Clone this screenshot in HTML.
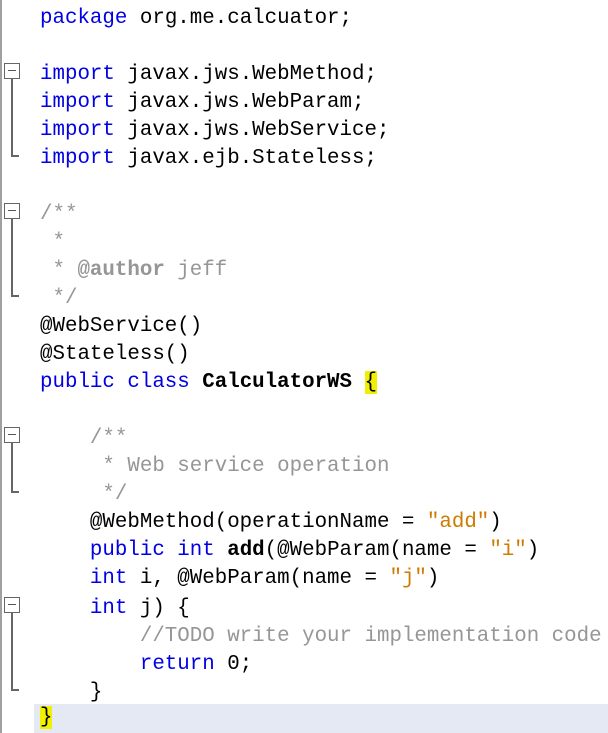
<!DOCTYPE html>
<html><head><meta charset="utf-8"><style>
body{margin:0;width:608px;height:733px;background:#fff;position:relative;overflow:hidden;font-family:"Liberation Mono",monospace;font-size:20.8px;}
.gut{position:absolute;left:0;top:0;width:2px;height:733px;background:#a0a0a0}
.l{position:absolute;left:40px;height:28px;line-height:28px;white-space:pre;color:#000;margin-top:3px}
.k{color:#0000e6}.c{color:#969696}.s{color:#ce7b00}.b{font-weight:bold}
.y{background:#f0f000}
.hl{position:absolute;left:34px;top:704px;width:574px;height:29px;background:#e4e9f4}
.box{position:absolute;left:4px;width:14px;height:14px;border:1px solid #666;background:#fff}
.box:after{content:"";position:absolute;left:3px;top:6px;width:8px;height:1px;background:#555}
.vl{position:absolute;left:11px;width:2px;background:#666}
.hz{position:absolute;left:11px;width:8px;height:2px;background:#666}
</style></head><body>
<div class="gut"></div>
<div class="hl"></div>
<div class="box" style="top:63px"></div><div class="vl" style="top:79px;height:77px"></div><div class="hz" style="top:155px"></div>
<div class="box" style="top:203px"></div><div class="vl" style="top:219px;height:77px"></div><div class="hz" style="top:295px"></div>
<div class="box" style="top:427px"></div><div class="vl" style="top:443px;height:49px"></div><div class="hz" style="top:491px"></div>
<div class="box" style="top:597px"></div><div class="vl" style="top:613px;height:77px"></div><div class="hz" style="top:689px"></div>
<div class="l" style="top:2px"><span class="k">package</span> org.me.calcuator;</div>
<div class="l" style="top:58px"><span class="k">import</span> javax.jws.WebMethod;</div>
<div class="l" style="top:86px"><span class="k">import</span> javax.jws.WebParam;</div>
<div class="l" style="top:114px"><span class="k">import</span> javax.jws.WebService;</div>
<div class="l" style="top:142px"><span class="k">import</span> javax.ejb.Stateless;</div>
<div class="l c" style="top:198px">/**</div>
<div class="l c" style="top:226px"> *</div>
<div class="l c" style="top:254px"> * <b>@author</b> jeff</div>
<div class="l c" style="top:282px"> */</div>
<div class="l" style="top:310px">@WebService()</div>
<div class="l" style="top:338px">@Stateless()</div>
<div class="l" style="top:366px"><span class="k">public class</span> <b>CalculatorWS</b> <span class="y">{</span></div>
<div class="l c" style="top:422px">    /**</div>
<div class="l c" style="top:450px">     * Web service operation</div>
<div class="l c" style="top:478px">     */</div>
<div class="l" style="top:506px">    @WebMethod(operationName = <span class="s">"add"</span>)</div>
<div class="l" style="top:534px">    <span class="k">public int</span> <b>add</b>(@WebParam(name = <span class="s">"i"</span>)</div>
<div class="l" style="top:562px">    <span class="k">int</span> i, @WebParam(name = <span class="s">"j"</span>)</div>
<div class="l" style="top:592px">    <span class="k">int</span> j) {</div>
<div class="l c" style="top:620px">        //TODO write your implementation code</div>
<div class="l" style="top:648px">        <span class="k">return</span> 0;</div>
<div class="l" style="top:676px">    }</div>
<div class="l" style="top:701px"><span class="y">}</span></div>
</body></html>
